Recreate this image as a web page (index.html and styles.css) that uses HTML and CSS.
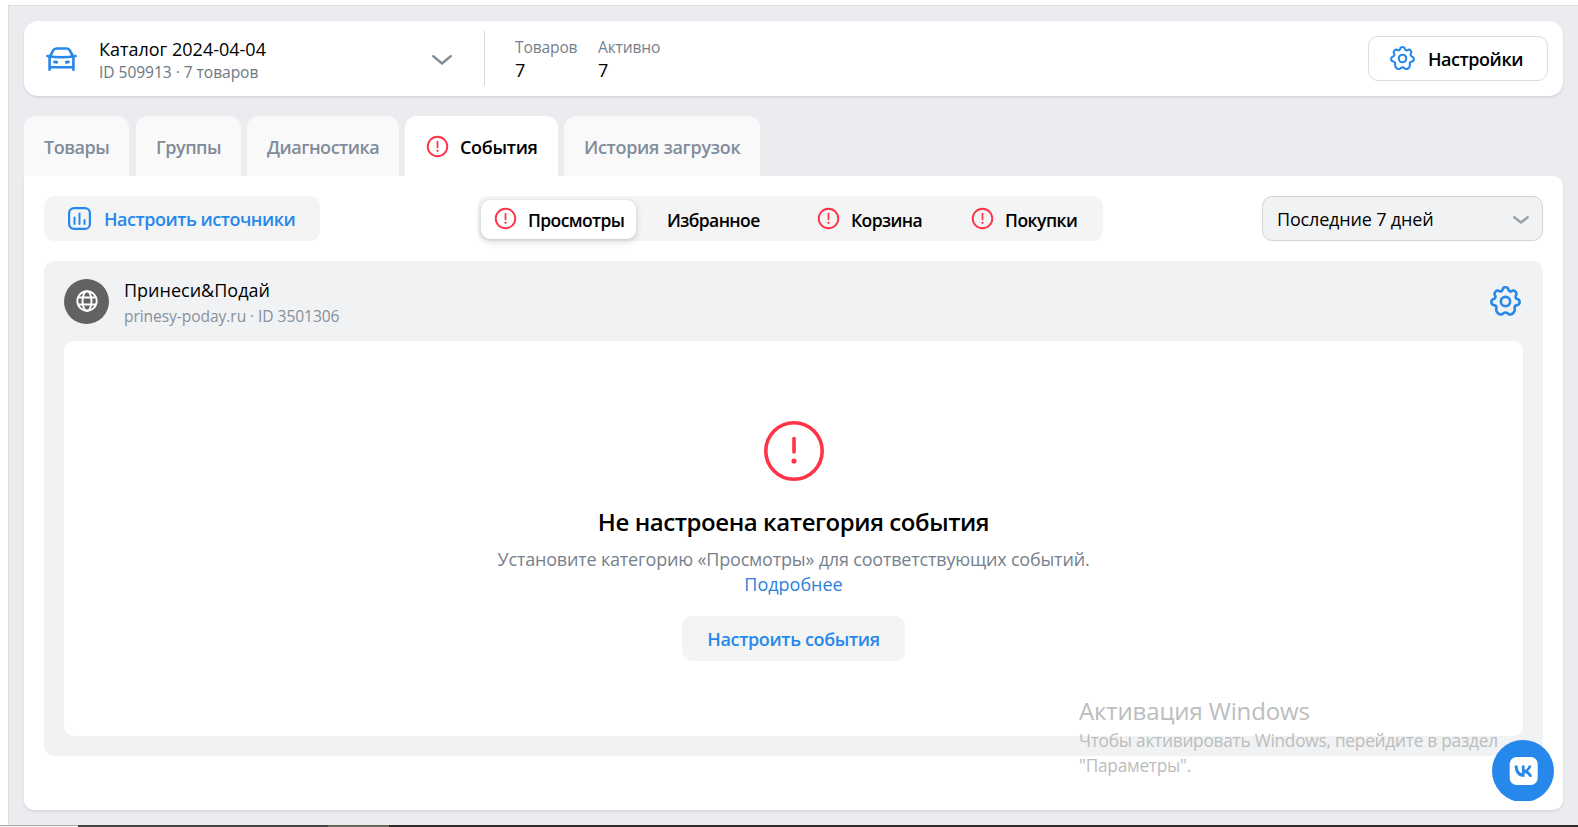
FILE: index.html
```html
<!DOCTYPE html>
<html lang="ru">
<head>
<meta charset="utf-8">
<title>Каталог</title>
<link rel="stylesheet" href="styles.css">
</head>
<body>
<svg width="0" height="0" class="defs">
  <symbol id="alert" viewBox="0 0 24 24"><circle cx="12" cy="12" r="10.2" fill="none" stroke="currentColor" stroke-width="2"/><path d="M12 7v6" stroke="currentColor" stroke-width="1.8" stroke-linecap="round"/><circle cx="12" cy="16.500" r="1.2" fill="currentColor"/></symbol>
  <symbol id="gear" viewBox="-12 -12 24 24"><path fill="none" stroke="currentColor" stroke-width="2" stroke-linejoin="round" d="M-2.3-9.2C-1.8-11.6 1.8-11.6 2.3-9.2C2.6-7.9 3.8-7.5 4.8-8.1C6.9-9.4 9.3-6.9 8.1-4.6C7.4-3.6 7.9-2.3 9.1-1.9C11.7-1.3 11.4 2.5 8.9 2.8C7.6 3 6.8 3.9 7.1 5.1C7.6 8 5.400 10.600 2.900 10C1.900 9.700 1.500 8.500 0 8.500C-1.500 8.500-1.900 9.700-2.900 10C-5.400 10.600-7.600 8-7.1 5.1C-6.8 3.9-7.6 3-8.9 2.8C-11.4 2.5-11.7-1.3-9.1-1.9C-7.9-2.3-7.4-3.6-8.1-4.6C-9.3-6.9-6.9-9.4-4.8-8.1C-3.8-7.5-2.6-7.9-2.3-9.2Z"/><circle r="3.6" fill="none" stroke="currentColor" stroke-width="2"/></symbol>
</svg>
<div class="page">
  <main class="workspace">
    <header class="catalog">
      <svg class="car" viewBox="0 0 32 26" fill="none" stroke="currentColor" stroke-width="2.7" stroke-linecap="round" stroke-linejoin="round"><path d="M4.500 9.5 7.300 4.300Q8.500 2.100 11 2.100H21Q23.500 2.100 24.700 4.300L27.500 9.5M1.5 9.900Q16 12.4 30.500 9.900M3.700 11V24M28.300 11V24M4 21.500H28"/><path d="M8.800 16 11 16.400M23.200 16 21 16.400" stroke-width="3"/></svg>
      <div class="catalog-name"><div class="t name">Каталог 2024-04-04</div><div class="t id">ID 509913 · 7 товаров</div></div>
      <svg class="chevron" viewBox="0 0 20 10" fill="none" stroke="currentColor" stroke-width="2.400" stroke-linecap="round" stroke-linejoin="round"><path d="M1.200 1.200 10 8.500 18.800 1.200"/></svg>
      <div class="divider"></div>
      <div class="stat first"><div class="t label">Товаров</div><div class="t num">7</div></div>
      <div class="stat"><div class="t label act">Активно</div><div class="t num">7</div></div>
      <button class="settings"><svg class="g24"><use href="#gear"/></svg><span class="t s-settings">Настройки</span></button>
    </header>
    <nav class="tabs">
      <div class="tab w1"><span class="t s-goods">Товары</span></div>
      <div class="tab w2"><span class="t s-groups">Группы</span></div>
      <div class="tab w3"><span class="t s-diag">Диагностика</span></div>
      <div class="tab w4 active"><svg class="a22"><use href="#alert"/></svg><span class="t s-events">События</span></div>
      <div class="tab w5"><span class="t s-history">История загрузок</span></div>
    </nav>
    <section class="panel">
      <div class="toolbar">
        <button class="soft sources"><svg class="bars" viewBox="0 0 23 23" fill="none" stroke="currentColor" stroke-width="2.200" stroke-linecap="round"><rect x="1.100" y="1.100" width="20.800" height="20.800" rx="5"/><path d="M6.500 10.500V17M11.500 6.500V17M16.500 13V17" stroke-width="2"/></svg><span class="t s-sources">Настроить источники</span></button>
        <div class="segments">
          <div class="segment on"><svg class="a22"><use href="#alert"/></svg><span class="t s-views">Просмотры</span></div>
          <div class="segment fav"><span class="t s-fav">Избранное</span></div>
          <div class="segment cart"><svg class="a22"><use href="#alert"/></svg><span class="t s-cart">Корзина</span></div>
          <div class="segment buy"><svg class="a22"><use href="#alert"/></svg><span class="t s-buy">Покупки</span></div>
        </div>
        <div class="select"><span class="t s-period">Последние 7 дней</span><svg class="small-chevron" viewBox="0 0 16 8" fill="none" stroke="currentColor" stroke-width="2.500" stroke-linecap="round" stroke-linejoin="round"><path d="M1.300 1.300 8 6.500 14.700 1.300"/></svg></div>
      </div>
      <div class="source">
        <div class="source-head">
          <div class="avatar"><svg viewBox="0 0 22 22" fill="none" stroke="#fff" stroke-width="1.900"><circle cx="11" cy="11" r="9.700"/><ellipse cx="11" cy="11" rx="4.500" ry="9.700"/><path d="M2.500 7.500H19.500M2.500 14.500H19.500"/></svg></div>
          <div class="source-name"><div class="t s-shop">Принеси&amp;Подай</div><div class="t s-url">prinesy-poday.ru · ID 3501306</div></div>
          <svg class="g30"><use href="#gear"/></svg>
        </div>
        <div class="empty">
          <svg class="big-alert" viewBox="0 0 60 60"><circle cx="30" cy="30" r="28.200" fill="none" stroke="currentColor" stroke-width="3.600"/><path d="M30 17.500V31" stroke="currentColor" stroke-width="3.600" stroke-linecap="round"/><circle cx="30" cy="40" r="2.600" fill="currentColor"/></svg>
          <h1 class="t s-h">Не настроена категория события</h1>
          <p class="t s-desc">Установите категорию «Просмотры» для соответствующих событий.</p>
          <a class="t s-more">Подробнее</a>
          <button class="soft configure"><span class="t s-conf">Настроить события</span></button>
        </div>
      </div>
    </section>
  </main>
  <div class="strip"><i class="s1"></i><i class="s2"></i><i class="s3"></i><i class="s4"></i></div>
</div>
<aside class="activation"><div class="t s-act">Активация Windows</div><div class="t s-a1">Чтобы активировать Windows, перейдите в раздел</div><div class="t s-a1">"Параметры".</div></aside>
<div class="vk"><svg viewBox="0 0 62 61"><circle cx="31" cy="31" r="31" fill="#2688eb"/><rect x="17.700" y="17" width="28" height="28" rx="7" fill="#fff"/><path fill="#2688eb" d="M31.700 36.800C26.100 36.800 22.700 32.500 22.600 25.400H25.600C25.700 30.600 28 32.800 29.900 33.200V25.400H32.600V29.900C34.300 29.700 36.100 27.700 36.700 25.400H39.500C39 28 37.100 30 35.700 30.900C37.100 31.600 39.300 33.300 40.200 36.800H37.100C36.500 34.800 34.800 33.200 32.600 33V36.800Z"/></svg></div>
</body>
</html>
```
FILE: styles.css
```css
* { box-sizing: border-box; margin: 0; padding: 0; }
body { width: 1578px; height: 827px; overflow: hidden; background: #fff; font-family: "Open Sans", "Noto Sans", sans-serif; font-size: 18px; line-height: 24px; color: #000; }
button { border: 0; background: none; font: inherit; color: inherit; }
svg { display: block; flex: none; }
.defs { position: absolute; }
.t { white-space: nowrap; }
.page { height: 827px; padding-top: 5px; display: flex; flex-direction: column; }
.workspace { height: 820px; margin-left: 8px; padding: 15px 15px 0; background: #ebecf0; border-top: 1px solid #dcdde1; border-left: 1px solid #d9dade; flex: none; }
.catalog { height: 75px; background: #fff; border-radius: 14px; box-shadow: 0 2px 3px rgba(0,0,0,.08), 0 0 2px rgba(0,0,0,.05); display: flex; align-items: center; padding: 0 15px 0 22px; }
.car { width: 31px; height: 26px; color: #2688eb; margin-top: 1px; }
.catalog-name { width: 333px; margin-left: 22px; padding-top: 3px; }
.name { height: 24px; }
.id { font-size: 15.600px; height: 22px; line-height: 22px; color: #6d7885; letter-spacing: -.06px; }
.chevron { width: 20px; height: 10px; color: #818c99; margin-top: 2px; }
.divider { width: 1px; height: 55px; margin-left: 32px; background: #d7d8d9; }
.stat { width: 82px; padding-top: 1px; }
.stat.first { margin-left: 30px; width: 83px; }
.label { font-size: 15.600px; height: 23px; line-height: 23px; color: #76818d; letter-spacing: -.15px; }
.num { height: 23px; line-height: 23px; }
.settings { margin-left: auto; width: 180px; height: 45px; border: 1px solid #dcdddf; border-radius: 10px; display: flex; align-items: center; font-weight: 600; padding-left: 21px; gap: 13px; }
.s-settings { letter-spacing: -.45px; }
.g24 { width: 25px; height: 25px; color: #2688eb; }
.g30 { width: 31px; height: 31px; color: #2688eb; margin-left: auto; margin-right: 2px; }
.tabs { height: 60px; margin-top: 20px; display: flex; font-weight: 600; color: #818c99; letter-spacing: -.48px; }
.tab { height: 60px; background: #f9f9f9; border-radius: 12px 12px 0 0; padding: 2px 0 0 20px; display: flex; align-items: center; }
.tab.active { background: #fff; color: #000; gap: 11px; padding-left: 21px; letter-spacing: -.3px; }
.tab.active .a22 { margin-top: -2px; }
.s-history { letter-spacing: -.3px; }
.w1 { width: 105px; margin-right: 7px; }
.w2 { width: 105px; margin-right: 6px; }
.w3 { width: 152px; margin-right: 6px; }
.w4 { width: 153px; margin-right: 6px; }
.w5 { width: 196px; }
.a22 { width: 23px; height: 23px; color: #ff3347; margin-top: -3px; }
.panel { height: 634px; background: #fff; border-radius: 0 10px 10px 10px; box-shadow: 0 2px 3px rgba(0,0,0,.08); padding: 20px; }
.toolbar { height: 45px; display: flex; font-weight: 600; }
.soft { background: #f4f4f4; border-radius: 10px; height: 45px; color: #2688eb; display: flex; align-items: center; }
.sources { width: 276px; padding-left: 24px; gap: 13px; letter-spacing: -.48px; }
.bars { width: 23px; height: 23px; }
.segments { width: 625px; height: 45px; margin-left: 158px; background: #f4f4f4; border-radius: 10px; display: flex; padding: 4px 3px 3px; font-size: 17.5px; letter-spacing: -.6px; }
.segment { height: 39px; display: flex; align-items: center; gap: 11px; padding-top: 0; }
.segment .a22 { margin-top: -2px; }
.segment.on { width: 155px; padding-left: 13px; background: #fff; border-radius: 9px; box-shadow: 0 3px 7px rgba(0,0,0,.15), 0 0 2px rgba(0,0,0,.1); }
.fav { width: 150px; padding-left: 31px; }
.cart { width: 154px; padding-left: 31px; }
.buy { padding-left: 31px; letter-spacing: -.5px; }
.select { width: 281px; height: 45px; margin-left: auto; border: 1px solid #d2d4d6; border-radius: 10px; background: #f0f2f4; padding: 0 13px 0 14px; display: flex; align-items: center; justify-content: space-between; font-weight: 400; letter-spacing: -.17px; }
.small-chevron { width: 16px; height: 8px; color: #99a2ad; margin-top: 2px; }
.source { height: 495px; margin-top: 20px; background: #f0f2f4; border-radius: 10px; padding: 0 20px; }
.source-head { height: 80px; display: flex; align-items: center; }
.avatar { width: 45px; height: 45px; border-radius: 50%; background: #626262; display: grid; place-items: center; }
.avatar svg { width: 22px; height: 22px; }
.source-name { margin-left: 15px; padding-top: 5px; }
.s-shop { height: 25px; }
.s-url { font-size: 15.600px; height: 27px; line-height: 27px; color: #87919c; letter-spacing: -.08px; }
.empty { height: 395px; background: #fff; border-radius: 10px; padding-top: 80px; display: flex; flex-direction: column; align-items: center; }
.big-alert { width: 60px; height: 60px; color: #ff3347; margin-left: 1px; }
.s-h { font-size: 24px; line-height: 34px; font-weight: 600; margin-top: 24px; letter-spacing: -.43px; }
.s-desc { line-height: 25px; margin-top: 8px; color: #76818d; letter-spacing: -.19px; }
.s-more { line-height: 25px; color: #2d7fdc; }
.configure { width: 223px; margin-top: 19px; justify-content: center; font-weight: 600; letter-spacing: -.36px; }
.strip { height: 2px; display: flex; }
.s1 { width: 78px; background: #f4f4f4; border-top: 1px solid #aaa; }
.s2 { width: 250px; background: #444341; }
.s3 { width: 61px; background: #68675f; }
.s4 { flex: 1; background: #302a2c; }
.activation { position: absolute; left: 1079px; top: 694px; color: #bcbdbd; line-height: 25px; }
.s-act { font-size: 24px; line-height: 33px; height: 34px; letter-spacing: -.14px; }
.s-a1 { font-size: 17.3px; letter-spacing: -.25px; }
.vk { position: absolute; left: 1492px; top: 740px; width: 62px; height: 61px; overflow: hidden; }
.vk svg { width: 62px; height: 61px; }
```
